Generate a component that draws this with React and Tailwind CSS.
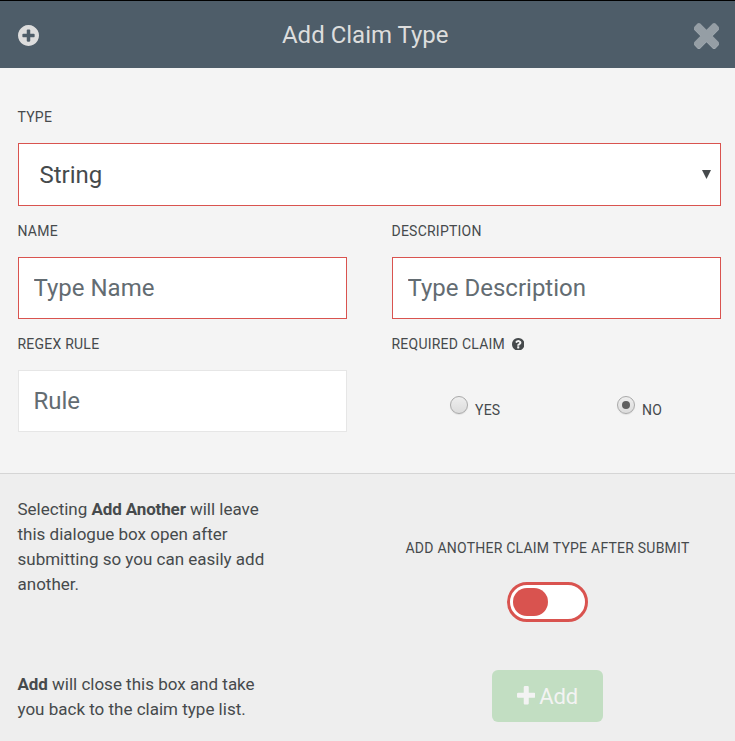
const CIRCLE =
  'q0 209-103 385.5t-279.5 279.5-385.5 103-385.5-103-279.5-279.5-103-385.5 103-385.5 279.5-279.5 385.5-103 385.5 103 279.5 279.5 103 385.5z';
const PLUS_CIRCLE =
  'M1344 960v-128q0-26-19-45t-45-19h-256v-256q0-26-19-45t-45-19h-128q-26 0-45 19t-19 45v256h-256q-26 0-45 19t-19 45v128q0 26 19 45t45 19h256v256q0 26 19 45t45 19h128q26 0 45-19t19-45v-256h256q26 0 45-19t19-45zm320-64' + CIRCLE;
const QUESTION_CIRCLE =
  'M1024 1376v-192q0-14-9-23t-23-9h-192q-14 0-23 9t-9 23v192q0 14 9 23t23 9h192q14 0 23-9t9-23zm256-672q0-88-55.5-163t-138.5-116-170-41q-243 0-371 213-15 24 8 42l132 100q7 6 19 6 16 0 25-12 53-68 86-92 34-24 86-24 48 0 85.5 26t37.5 59q0 38-20 61t-68 45q-63 28-115.5 86.5t-52.5 125.5v36q0 14 9 23t23 9h192q14 0 23-9t9-23q0-19 21.5-49.5t54.5-49.5q32-18 49-28.5t46-35 44.5-48 28-60.5 12.5-81zm384 192' + CIRCLE;
const TIMES =
  'M1490 1322q0 40-28 68l-136 136q-28 28-68 28t-68-28l-294-294-294 294q-28 28-68 28t-68-28l-136-136q-28-28-28-68t28-68l294-294-294-294q-28-28-28-68t28-68l136-136q28-28 68-28t68 28l294 294 294-294q28-28 68-28t68 28l136 136q28 28 28 68t-28 68l-294 294 294 294q28 28 28 68z';
const PLUS =
  'M1600 736v192q0 40-28 68t-68 28h-416v416q0 40-28 68t-68 28h-192q-40 0-68-28t-28-68v-416h-416q-40 0-68-28t-28-68v-192q0-40 28-68t68-28h416v-416q0-40 28-68t68-28h192q40 0 68 28t28 68v416h416q40 0 68 28t28 68z';

function Icon({ path, viewBox = '128 128 1536 1536', className }) {
  return (
    <svg viewBox={viewBox} fill="currentColor" className={className} aria-hidden="true">
      <path d={path} />
    </svg>
  );
}

function Label({ children, className = '' }) {
  return (
    <div className={`flex h-5 items-center whitespace-nowrap text-[14px] leading-5 tracking-[0.23px] ${className}`}>
      {children}
    </div>
  );
}

function TextField({ label, placeholder, border }) {
  return (
    <div className="w-[329px] shrink-0">
      <Label className="-ml-[0.5px]">{label}</Label>
      <input
        placeholder={placeholder}
        className={`mt-4 block h-[62px] w-full border bg-white px-[14.5px] text-2xl outline-none placeholder:text-[#636c72] ${border}`}
      />
    </div>
  );
}

function Radio({ label, checked }) {
  return (
    <div className="flex">
      <span className="flex size-[18px] items-center justify-center rounded-full border border-[#a9a9a9] bg-linear-to-b from-[#eeeeee] to-[#dcdcdc] shadow-[0_1px_1px_rgba(0,0,0,0.08)]">
        {checked && <span className="size-2 rounded-full bg-[#606060]" />}
      </span>
      <Label className="mt-1 ml-[7px]">{label}</Label>
    </div>
  );
}

export default function App() {
  return (
    <div className="h-[741px] w-[735px] overflow-hidden bg-[#f4f4f4] font-[Roboto,sans-serif] text-[#464a4c]">
      <header className="flex h-[68px] items-center justify-between border-t border-black bg-[#4e5d69] pr-4 pl-[17px] text-[#dddddd]">
        <Icon path={PLUS_CIRCLE} className="mt-px ml-[0.5px] size-[21px]" />
        <h1 className="-ml-[2px] text-2xl">Add Claim Type</h1>
        <Icon
          path={TIMES}
          viewBox="302 366 1188 1188"
          className="mt-px size-[25px] text-[#959ea5] drop-shadow-[0_1px_0_#a0a9b0]"
        />
      </header>

      <main className="h-[405px] px-[18px] pt-[39px]">
        <Label className="-ml-[0.5px]">TYPE</Label>
        <div className="mt-4 flex h-[63px] w-[703px] items-center justify-between border border-[#d9534f] bg-white pr-[9px] pl-[20.5px] text-2xl">
          <span>String</span>
          <svg viewBox="0 0 9 9" className="size-[9px]" fill="currentColor">
            <path d="M0 0h9L4.5 9z" />
          </svg>
        </div>
        <div className="mt-[15px] flex gap-[45px]">
          <TextField label="NAME" placeholder="Type Name" border="border-[#d9534f]" />
          <TextField label="DESCRIPTION" placeholder="Type Description" border="border-[#d9534f]" />
        </div>
        <div className="mt-[15px] flex gap-[45px]">
          <TextField label="REGEX RULE" placeholder="Rule" border="border-[#e6e6e6]" />
          <div className="w-[329px] shrink-0">
            <Label className="-ml-[0.5px]">
              REQUIRED CLAIM
              <Icon path={QUESTION_CIRCLE} className="ml-[6.5px] size-[12.5px]" />
            </Label>
            <div className="mt-[42px] flex pl-[58px]">
              <div className="w-[167px]">
                <Radio label="YES" />
              </div>
              <Radio label="NO" checked />
            </div>
          </div>
        </div>
      </main>

      <footer className="flex h-[268px] border-t border-[#d5d5d5] bg-[#eeeeee] pl-[17.5px]">
        <div className="w-[374.5px] pt-[23px] text-[17px] leading-[25px]">
          <p>
            Selecting <strong className="tracking-[-0.14px]">Add Another</strong> will leave
            <br />
            this dialogue box open after
            <br />
            submitting so you can easily add
            <br />
            another.
          </p>
          <p className="mt-[75px]">
            <strong className="tracking-[-0.1px]">Add</strong> will close this box and take
            <br />
            you back to the claim type list.
          </p>
        </div>
        <div className="flex w-[311px] flex-col items-center pt-16">
          <Label>ADD ANOTHER CLAIM TYPE AFTER SUBMIT</Label>
          <div className="mt-6 h-10 w-[81px] rounded-full border-3 border-[#d9534f] bg-white p-[3px]">
            <div className="h-7 w-[35px] rounded-full bg-[#d9534f]" />
          </div>
          <button className="mt-12 flex h-[52px] w-[111px] items-center justify-center gap-[4px] rounded-md bg-[#c2dec2] text-[22px] tracking-[-0.1px] text-[#f3f3f3]">
            <Icon path={PLUS} viewBox="192 128 1408 1408" className="-mt-px size-[18.5px]" />
            Add
          </button>
        </div>
      </footer>
    </div>
  );
}
